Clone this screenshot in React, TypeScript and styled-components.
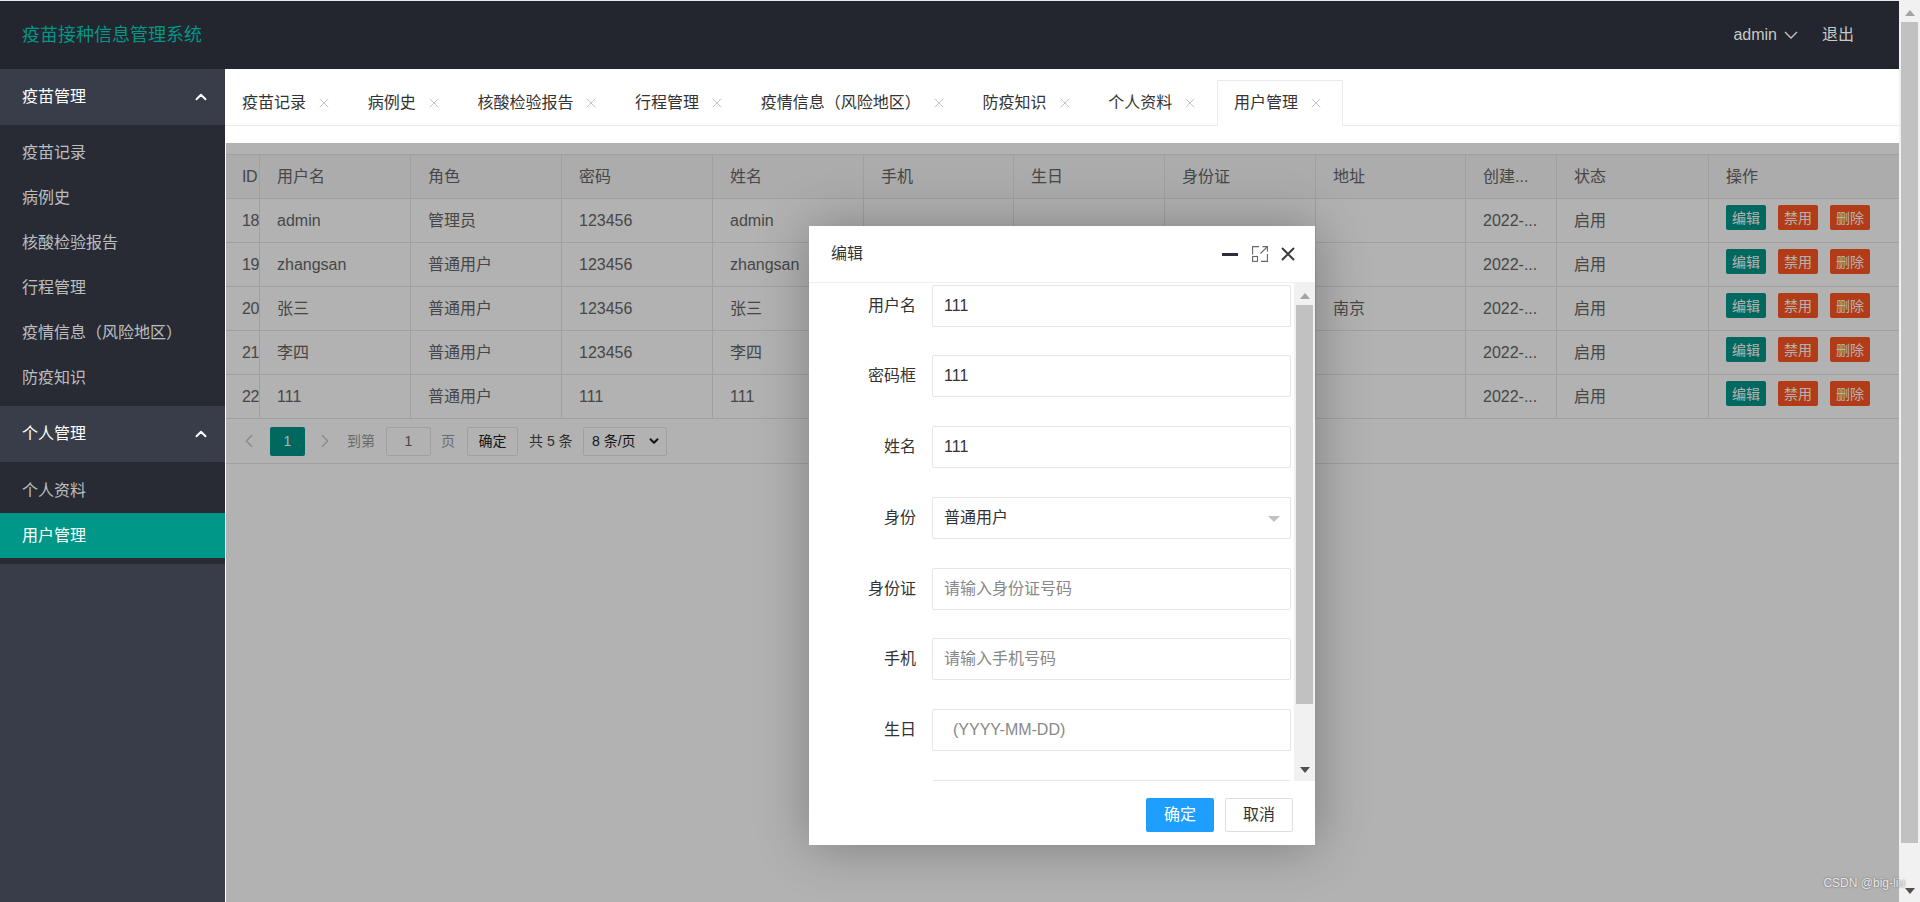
import React from 'react';
import styled, { createGlobalStyle } from 'styled-components';
import { ChevronDown, ChevronLeft, ChevronRight, ChevronUp, X } from 'lucide-react';

const GlobalStyle = createGlobalStyle`
	html, body, #root {
		margin: 0;
		height: 100%;
		overflow: hidden;
	}
	* {
		box-sizing: border-box;
	}
	body {
		font-family: "Liberation Sans", "Noto Sans CJK SC", sans-serif;
		font-size: 16px;
		line-height: 20px;
		color: #666;
	}
`;

const navGroups = [
	{ title: '疫苗管理', top: 5, bottom: 6, items: ['疫苗记录', '病例史', '核酸检验报告', '行程管理', '疫情信息（风险地区）', '防疫知识'] },
	{ title: '个人管理', top: 6, bottom: 6, items: ['个人资料', '用户管理'] },
];

const tabs = ['疫苗记录', '病例史', '核酸检验报告', '行程管理', '疫情信息（风险地区）', '防疫知识', '个人资料', '用户管理'];

const columns = [34, 151, 151, 151, 151, 150, 151, 151, 150, 91, 152, 190];
const heads = ['ID', '用户名', '角色', '密码', '姓名', '手机', '生日', '身份证', '地址', '创建...', '状态', '操作'];

const users = [
	{ id: 18, name: 'admin', role: '管理员', pass: '123456', real: 'admin', addr: '' },
	{ id: 19, name: 'zhangsan', role: '普通用户', pass: '123456', real: 'zhangsan', addr: '' },
	{ id: 20, name: '张三', role: '普通用户', pass: '123456', real: '张三', addr: '南京' },
	{ id: 21, name: '李四', role: '普通用户', pass: '123456', real: '李四', addr: '' },
	{ id: 22, name: '111', role: '普通用户', pass: '111', real: '111', addr: '' },
];

export default function App() {
	return (
		<Page>
			<GlobalStyle />
			<Main>
				<Header>
					<Logo>疫苗接种信息管理系统</Logo>
					<UserArea>
						<UserName>admin</UserName>
						<svg width="14" height="8" viewBox="0 0 14 8" fill="none" stroke="#c8c8c8" strokeWidth="1.3">
							<path d="M1 1L7 7L13 1" />
						</svg>
						<Logout>退出</Logout>
					</UserArea>
				</Header>
				<Body>
					<Sidebar>
						{navGroups.map(group => (
							<div key={group.title}>
								<GroupTitle>
									{group.title}
									<ChevronUp size={18} strokeWidth={2.5} />
								</GroupTitle>
								<GroupList $top={group.top} $bottom={group.bottom}>
									{group.items.map(item => (
										<NavItem key={item} $active={item === '用户管理'}>{item}</NavItem>
									))}
								</GroupList>
							</div>
						))}
					</Sidebar>
					<Content>
						<TabBar>
							<TabList>
								{tabs.map(tab => (
									<Tab key={tab} $active={tab === '用户管理'}>
										{tab}
										<TabClose><X size={16} strokeWidth={1.2} /></TabClose>
									</Tab>
								))}
							</TabList>
						</TabBar>
						<Frame>
							<Table>
								<colgroup>
									{columns.map((w, i) => <col key={i} width={w} />)}
								</colgroup>
								<thead>
									<tr>
										{heads.map(h => <th key={h}>{h}</th>)}
									</tr>
								</thead>
								<tbody>
									{users.map(u => (
										<tr key={u.id}>
											<td>{u.id}</td>
											<td>{u.name}</td>
											<td>{u.role}</td>
											<td>{u.pass}</td>
											<td>{u.real}</td>
											<td></td>
											<td></td>
											<td></td>
											<td>{u.addr}</td>
											<td>2022-...</td>
											<td>启用</td>
											<td>
												<Actions>
													<ActionButton $color="#009688">编辑</ActionButton>
													<ActionButton $color="#FF5722">禁用</ActionButton>
													<ActionButton $color="#FF5722">删除</ActionButton>
												</Actions>
											</td>
										</tr>
									))}
								</tbody>
							</Table>
							<Pager>
								<PageArrow><ChevronLeft size={22} strokeWidth={1.2} /></PageArrow>
								<PageCurrent>1</PageCurrent>
								<PageArrowNext><ChevronRight size={22} strokeWidth={1.2} /></PageArrowNext>
								<PagerLabel>到第</PagerLabel>
								<PageInput readOnly value="1" />
								<PagerUnit>页</PagerUnit>
								<PagerGo>确定</PagerGo>
								<PagerTotal>共 5 条</PagerTotal>
								<PagerSelect>
									8 条/页
									<ChevronDown size={14} strokeWidth={3.5} />
								</PagerSelect>
							</Pager>
							<Shade />
							<Dialog>
								<DialogHeader>
									<DialogTitle>编辑</DialogTitle>
									<DialogTools>
										<MinIcon />
										<svg width="16" height="16" viewBox="0 0 16 16" fill="none" stroke="#666" strokeWidth="1.1">
											<path d="M7 .6H.6V8.5M9 15.4H15.4V8M8.5 7.5L15.2 .8M10.5 .6H15.4V5.5" />
											<rect x=".6" y="10.5" width="4.9" height="4.9" />
										</svg>
										<svg width="14" height="14" viewBox="0 0 14 14" fill="none" stroke="#3a3a3a" strokeWidth="2">
											<path d="M1 1L13 13M13 1L1 13" />
										</svg>
									</DialogTools>
								</DialogHeader>
								<DialogBody>
									<Form>
										<FormRow><FormLabel>用户名</FormLabel><TextInput readOnly value="111" /></FormRow>
										<FormRow><FormLabel>密码框</FormLabel><TextInput readOnly value="111" /></FormRow>
										<FormRow><FormLabel>姓名</FormLabel><TextInput readOnly value="111" /></FormRow>
										<FormRow>
											<FormLabel>身份</FormLabel>
											<SelectBox>普通用户<SelectCaret /></SelectBox>
										</FormRow>
										<FormRow><FormLabel>身份证</FormLabel><TextInput readOnly placeholder="请输入身份证号码" /></FormRow>
										<FormRow><FormLabel>手机</FormLabel><TextInput readOnly placeholder="请输入手机号码" /></FormRow>
										<FormRow><FormLabel>生日</FormLabel><DateInput readOnly placeholder="(YYYY-MM-DD)" /></FormRow>
										<FormRow><FormLabel /><TextInput readOnly /></FormRow>
									</Form>
									<ScrollBar>
										<ScrollUp />
										<ScrollThumb $height={399} />
										<ScrollDown />
									</ScrollBar>
								</DialogBody>
								<DialogFooter>
									<PrimaryButton>确定</PrimaryButton>
									<PlainButton>取消</PlainButton>
								</DialogFooter>
							</Dialog>
						</Frame>
					</Content>
				</Body>
			</Main>
			<ScrollBar>
				<ScrollUp />
				<ScrollThumb $height={821} />
				<ScrollDown />
			</ScrollBar>
			<Watermark>CSDN @big-liu</Watermark>
		</Page>
	);
}

/**
 * Styled Components...
 */
const Page = styled.div`
	position: relative;
	display: flex;
	height: 902px;
	width: 1920px;
	overflow: hidden;
	background: #fff;
`;
const Main = styled.div`
	flex: 1;
	min-width: 0;
	display: flex;
	flex-direction: column;
`;
const Header = styled.header`
	height: 69px;
	flex: none;
	display: flex;
	align-items: center;
	justify-content: space-between;
	padding: 0 45px 0 22px;
	background: #23262E;
	border-top: 1px solid #e8e8e8;
`;
const Logo = styled.div`
	font-size: 18px;
	color: #009688;
`;
const UserArea = styled.div`
	display: flex;
	align-items: center;
	color: #c8c8c8;
`;
const UserName = styled.span`
	margin-right: 7px;
`;
const Logout = styled.span`
	margin-left: 24px;
`;
const Body = styled.div`
	flex: 1;
	min-height: 0;
	display: flex;
`;
const Sidebar = styled.aside`
	width: 225px;
	flex: none;
	background: #393D49;
`;
const GroupTitle = styled.div`
	height: 56px;
	display: flex;
	align-items: center;
	justify-content: space-between;
	padding: 0 15px 0 22px;
	color: #fff;
	background: #393D49;
`;
const GroupList = styled.div<{ $top: number; $bottom: number }>`
	padding: ${props => props.$top}px 0 ${props => props.$bottom}px;
	background: #282B33;
`;
const NavItem = styled.div<{ $active?: boolean }>`
	height: 45px;
	line-height: 45px;
	padding-left: 22px;
	color: ${props => props.$active ? '#fff' : 'rgba(255, 255, 255, .7)'};
	background: ${props => props.$active ? '#009688' : 'transparent'};
`;
const Content = styled.div`
	flex: 1;
	min-width: 0;
	display: flex;
	flex-direction: column;
`;
const TabBar = styled.div`
	height: 74px;
	flex: none;
	padding-top: 11px;
`;
const TabList = styled.div`
	display: flex;
	height: 46px;
	border-bottom: 1px solid #eaeaea;
`;
const Tab = styled.div<{ $active?: boolean }>`
	height: 46px;
	display: flex;
	align-items: center;
	color: #333;
	white-space: nowrap;
	background: ${props => props.$active ? '#fff' : 'transparent'};
	border: 1px solid ${props => props.$active ? '#eaeaea' : 'transparent'};
	border-bottom-color: ${props => props.$active ? '#fff' : 'transparent'};
	border-left-width: ${props => props.$active ? '1px' : '0'};
	border-right-width: ${props => props.$active ? '1px' : '0'};
	padding-left: ${props => props.$active ? '16px' : '17px'};
	padding-right: ${props => props.$active ? '16.7px' : '17.7px'};
`;
const TabClose = styled.span`
	display: flex;
	margin-left: 10px;
	margin-right: 1px;
	color: #b5b5b5;
`;
const Frame = styled.div`
	position: relative;
	flex: 1;
	min-height: 0;
	margin-left: 1px;
	padding-top: 11px;
	overflow: hidden;
	background: #fff;
`;
const Table = styled.table`
	width: 1673px;
	table-layout: fixed;
	border-collapse: separate;
	border-spacing: 0;
	border-top: 1px solid #e6e6e6;
	th, td {
		height: 44px;
		padding: 0 0 0 17px;
		text-align: left;
		font-weight: 400;
		color: #666;
		white-space: nowrap;
		overflow: hidden;
		border-right: 1px solid #e6e6e6;
		border-bottom: 1px solid #e6e6e6;
	}
	th {
		background: #f6f6f6;
	}
	th:first-child, td:first-child {
		padding-left: 16px;
		letter-spacing: -.5px;
		overflow: visible;
	}
	th:last-child, td:last-child {
		border-right: 0;
	}
`;
const Actions = styled.div`
	display: flex;
	gap: 12px;
	padding-bottom: 6px;
`;
const ActionButton = styled.span<{ $color: string }>`
	width: 40px;
	height: 25px;
	display: flex;
	align-items: center;
	justify-content: center;
	font-size: 14px;
	color: #fff;
	border-radius: 2px;
	background: ${props => props.$color};
`;
const Pager = styled.div`
	height: 45px;
	display: flex;
	align-items: center;
	padding-left: 12px;
	font-size: 14px;
	border-bottom: 1px solid #e6e6e6;
`;
const PageArrow = styled.span`
	display: flex;
	width: 22px;
	margin-right: 10px;
	color: #c2c2c2;
`;
const PageArrowNext = styled(PageArrow)`
	margin: 0 11px 0 9px;
`;
const PageCurrent = styled.span`
	width: 35px;
	height: 29px;
	display: flex;
	align-items: center;
	justify-content: center;
	color: #fff;
	border-radius: 2px;
	background: #009688;
`;
const PagerLabel = styled.span`
	color: #999;
	width: 28px;
`;
const PageInput = styled.input`
	width: 45px;
	height: 29px;
	margin-left: 11px;
	padding: 0;
	text-align: center;
	font: inherit;
	color: #666;
	outline: none;
	border: 1px solid #e6e6e6;
	border-radius: 2px;
	background: #fff;
`;
const PagerUnit = styled.span`
	margin-left: 10px;
	color: #999;
`;
const PagerGo = styled.span`
	width: 51px;
	height: 29px;
	margin-left: 12px;
	display: flex;
	align-items: center;
	justify-content: center;
	color: #222;
	border: 1px solid #e6e6e6;
	border-radius: 2px;
`;
const PagerTotal = styled.span`
	width: 43px;
	margin-left: 11px;
	color: #444;
	white-space: nowrap;
`;
const PagerSelect = styled.span`
	width: 84px;
	height: 29px;
	margin-left: 11px;
	display: flex;
	align-items: center;
	justify-content: space-between;
	padding: 0 5px 0 8px;
	color: #222;
	border: 1px solid #e6e6e6;
	border-radius: 2px;
`;
const Shade = styled.div`
	position: absolute;
	inset: 0;
	background: rgba(0, 0, 0, .3);
`;
const Dialog = styled.div`
	position: absolute;
	left: 583px;
	top: 83px;
	width: 506px;
	height: 619px;
	display: flex;
	flex-direction: column;
	background: #fff;
	box-shadow: 1px 1px 50px rgba(0, 0, 0, .3);
`;
const DialogHeader = styled.div`
	height: 57px;
	flex: none;
	display: flex;
	align-items: center;
	justify-content: space-between;
	padding: 0 20px 0 22px;
	border-bottom: 1px solid #f0f0f0;
`;
const DialogTitle = styled.div`
	color: #333;
`;
const DialogTools = styled.div`
	display: flex;
	align-items: center;
	gap: 13.5px;
`;
const MinIcon = styled.span`
	width: 16px;
	height: 3px;
	margin-top: 1px;
	background: #2E2D3C;
`;
const DialogBody = styled.div`
	height: 498px;
	flex: none;
	display: flex;
	overflow: hidden;
`;
const Form = styled.div`
	flex: 1;
	min-width: 0;
	display: flex;
	flex-direction: column;
	gap: 28.8px;
	padding: 1.5px 3px 0 0;
`;
const FormRow = styled.div`
	flex: none;
	height: 42px;
	display: flex;
	align-items: center;
`;
const FormLabel = styled.label`
	width: 107px;
	margin-right: 16px;
	text-align: right;
	color: #333;
`;
const TextInput = styled.input`
	flex: 1;
	min-width: 0;
	height: 42px;
	padding: 0 11px;
	font: inherit;
	color: #333;
	outline: none;
	border: 1px solid #e6e6e6;
	border-radius: 2px;
	background: #fff;
	&::placeholder {
		color: #888;
	}
`;
const DateInput = styled(TextInput)`
	padding-left: 20px;
`;
const SelectBox = styled.div`
	position: relative;
	flex: 1;
	height: 42px;
	display: flex;
	align-items: center;
	padding: 0 11px;
	color: #333;
	border: 1px solid #e6e6e6;
	border-radius: 2px;
`;
const SelectCaret = styled.span`
	position: absolute;
	right: 10px;
	top: 18px;
	border-style: solid;
	border-width: 6px 6px 0;
	border-color: #c2c2c2 transparent transparent;
`;
const DialogFooter = styled.div`
	flex: 1;
	display: flex;
	align-items: flex-start;
	justify-content: flex-end;
	gap: 11px;
	padding: 17px 22px 0 0;
`;
const PrimaryButton = styled.span`
	width: 68px;
	height: 34px;
	display: flex;
	align-items: center;
	justify-content: center;
	color: #fff;
	border-radius: 2px;
	background: #1E9FFF;
`;
const PlainButton = styled(PrimaryButton)`
	color: #333;
	background: #fff;
	border: 1px solid #dedede;
`;
const ScrollBar = styled.div`
	width: 21px;
	flex: none;
	display: flex;
	flex-direction: column;
	align-items: center;
	background: #f1f1f1;
`;
const ScrollThumb = styled.div<{ $height: number }>`
	width: 17px;
	height: ${props => props.$height}px;
	flex: none;
	background: #c1c1c1;
`;
const ScrollUp = styled.div`
	height: 22px;
	flex: none;
	margin-bottom: 0;
	padding-top: 10px;
	&::before {
		content: '';
		display: block;
		border-style: solid;
		border-width: 0 5px 6px;
		border-color: transparent transparent #a3a3a3;
	}
`;
const ScrollDown = styled.div`
	margin-top: auto;
	height: 22px;
	flex: none;
	padding-top: 8px;
	&::before {
		content: '';
		display: block;
		border-style: solid;
		border-width: 6px 5px 0;
		border-color: #505050 transparent transparent;
	}
`;
const Watermark = styled.div`
	position: absolute;
	right: 15px;
	bottom: 9px;
	font-size: 12px;
	color: #e8e8e8;
	text-shadow: 0 0 2px #555;
`;
